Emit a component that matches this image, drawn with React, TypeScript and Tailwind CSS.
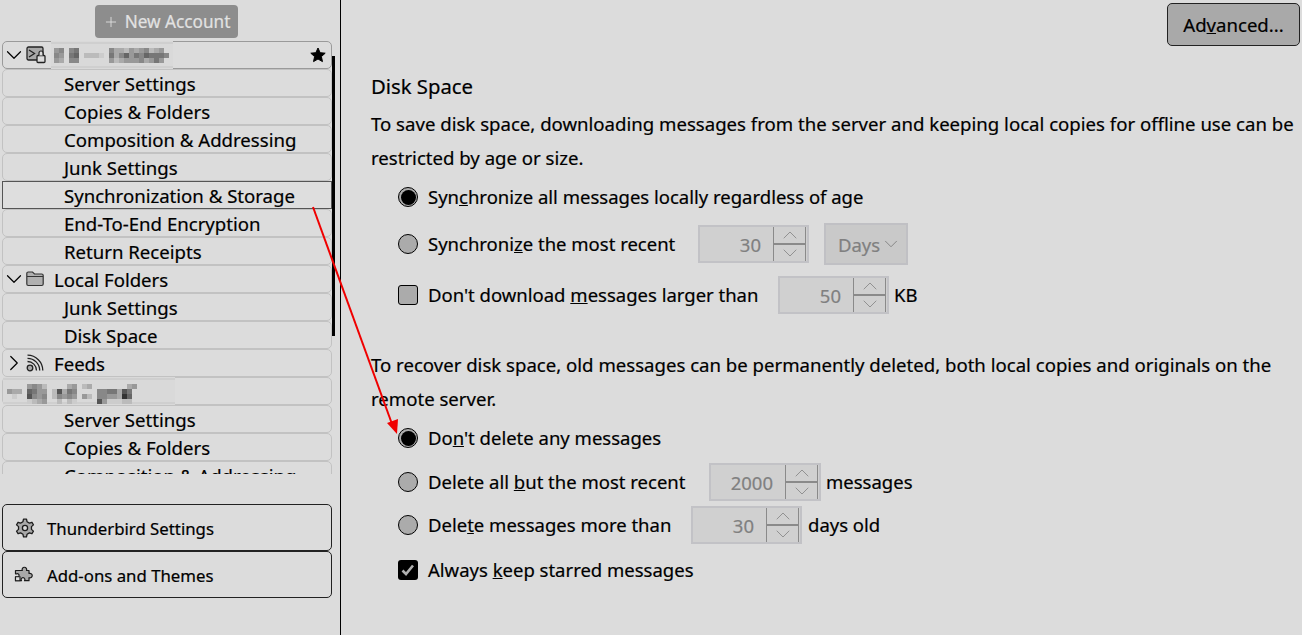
import React from "react";
import { ChevronDown, ChevronRight, ChevronUp, Plus } from "lucide-react";

const font = "font-['Noto_Sans','Open_Sans',sans-serif]";

function Pixels({ cells, w, left, top }: { cells: string; w: number; left: number; top: number }) {
  const rows = cells.split("|");
  return (
    <svg width={w} height={28} className="shrink-0 -my-[1px]">
      <rect x="0" y="0" width={w} height="28" fill="#d9d9d9" />
      <rect x="0" y="1" width={w} height="2" fill="#cfcfcf" />
      <rect x="0" y="25" width={w} height="2" fill="#cfcfcf" />
      {rows.map((r, y) =>
        r.split("").map((c, x) =>
          c === "." ? null : (
            <rect key={x + "-" + y} x={left + x * 5} y={top + y * 5} width={5} height={5} fill={"#" + c + c + c + c + c + c} />
          )
        )
      )}
    </svg>
  );
}

function Row({ children, selected, first }: { children: React.ReactNode; selected?: boolean; first?: boolean }) {
  return (
    <div
      className={
        "h-[28px] shrink-0 flex items-center border text-black " +
        (selected
          ? "border-[#555555] bg-[#dedede]"
          : first
            ? "border-[#9a9a9a] rounded-[5px]"
            : "border-[#c2c2c2] rounded-[5px]")
      }
    >
      {children}
    </div>
  );
}

function Sub({ label, selected }: { label: string; selected?: boolean }) {
  return (
    <Row selected={selected}>
      <span className="pl-[61px] mt-[2px] whitespace-nowrap">{label}</span>
    </Row>
  );
}

function Twist({ open }: { open?: boolean }) {
  const Icon = open ? ChevronDown : ChevronRight;
  return (
    <span className="w-[21px] h-[26px] shrink-0 flex items-center justify-center">
      <Icon size={26} strokeWidth={1.1} className="shrink-0" />
    </span>
  );
}

function Radio({ on }: { on?: boolean }) {
  return (
    <span className="w-[20px] h-[20px] shrink-0 rounded-full border border-black bg-[#ababab] flex items-center justify-center">
      {on && <span className="w-[15px] h-[15px] rounded-full bg-black block" />}
    </span>
  );
}

function Spinner({ value, width }: { value: string; width: string }) {
  return (
    <div className={"h-[38px] border-2 border-[#c2c2c6] bg-[#d0d0d0] flex items-stretch shrink-0 " + width}>
      <div className="flex-1 flex items-center justify-end pr-[12px] pt-[2px] text-[#808080]">{value}</div>
      <div className="w-[33px] border-x border-[#8a8a8a] flex flex-col mr-[1px]">
        <div className="flex-1 flex items-center justify-center overflow-hidden">
          <ChevronUp size={24} strokeWidth={0.9} className="text-[#8a8a8a] shrink-0" />
        </div>
        <div className="h-[2px] bg-[#8a8a8a]" />
        <div className="flex-1 flex items-center justify-center overflow-hidden">
          <ChevronDown size={24} strokeWidth={0.9} className="text-[#8a8a8a] shrink-0" />
        </div>
      </div>
    </div>
  );
}

function Gear() {
  const pts: string[] = [];
  const n = 6;
  for (let i = 0; i < n; i++) {
    const a = (i * 2 * Math.PI) / n - Math.PI / 2;
    const step = (2 * Math.PI) / n;
    const p = (r: number, t: number) => (10 + r * Math.cos(t)).toFixed(2) + " " + (10 + r * Math.sin(t)).toFixed(2);
    pts.push((i === 0 ? "M" : "L") + p(6.6, a - step * 0.3));
    pts.push("L" + p(9, a - step * 0.16));
    pts.push("L" + p(9, a + step * 0.16));
    pts.push("L" + p(6.6, a + step * 0.3));
  }
  return (
    <svg width="20" height="20" viewBox="0 0 20 20" className="shrink-0">
      <path d={pts.join(" ") + "Z"} fill="#a8a8a8" stroke="#1c1c1c" strokeWidth="1.3" strokeLinejoin="round" />
      <circle cx="10" cy="10" r="2.6" fill="#dcdcdc" stroke="#1c1c1c" strokeWidth="1.3" />
    </svg>
  );
}

function PuzzleIcon() {
  return (
    <svg width="21" height="20" viewBox="0 0 21 20" className="shrink-0">
      <path
        d="M6 5.500h2.300a2.300 2.300 0 1 1 4.200 0h2.500v3a2.300 2.300 0 1 1 0 4.200v3h-4.500a1.900 1.900 0 1 0-3 0H1.500v-3.700h1.300a1.700 1.700 0 1 0 0-3.200H1.500V5.500z"
        fill="#a8a8a8"
        stroke="#1c1c1c"
        strokeWidth="1.200"
        strokeLinejoin="round"
      />
      <path d="M1.500 11.800h4.500v3.900H1.500z" fill="#dcdcdc" stroke="#1c1c1c" strokeWidth="1.100" />
    </svg>
  );
}

export default function App() {
  return (
    <div className={"relative w-[1302px] h-[635px] overflow-hidden bg-[#dcdcdc] flex text-[18.6px] leading-[28px] text-black [-webkit-text-stroke:0.2px] " + font}>
      <aside className="relative w-[341px] h-full shrink-0 border-r border-black flex flex-col px-[2px]">
        <div className="w-[329px] h-[41px] shrink-0 flex justify-center pt-[5px] pb-[3px]">
          <div className="w-[143px] h-[33px] rounded-[4px] bg-[#8d8d8d] text-[#e2e2e2] text-[17.200px] flex items-center justify-center gap-[6px]">
            <Plus size={16} strokeWidth={1.3} />
            <span>New Account</span>
          </div>
        </div>
        <div className="w-[330px] h-[433px] overflow-hidden flex flex-col">
          <Row first>
            <Twist open />
            <svg width="20" height="18" viewBox="0 0 20 18" className="ml-[2px] shrink-0">
              <rect x="1" y="1" width="16" height="13" rx="1.500" fill="#a9a9a9" stroke="#222" strokeWidth="1.300" />
              <path d="M3 4l5.500 3.500L3 11" fill="none" stroke="#222" strokeWidth="1.300" />
              <rect x="11" y="9.500" width="8" height="7" rx="1" fill="#dcdcdc" stroke="#222" strokeWidth="1.300" />
              <path d="M13 9.500V7a2 2 0 0 1 4 0v2.500" fill="#dcdcdc" stroke="#222" strokeWidth="1.200" />
            </svg>
            <span className="w-[5px] shrink-0" />
            <Pixels
              w={122}
              left={3}
              top={7}
              cells="98.87......8aab9a98ba9|89.76.bbbc.7a8697867778|9a.88......9ba9998a979"
            />
            <svg width="16" height="16" viewBox="0 0 24 24" className="ml-auto mr-[5px] shrink-0">
              <path d="M12 1.500l3.200 7 7.600.8-5.700 5.100 1.600 7.500L12 18l-6.700 3.900 1.600-7.500-5.700-5.100 7.600-.8z" fill="#000" stroke="#000" strokeWidth="1.500" strokeLinejoin="round" />
            </svg>
          </Row>
          <Sub label="Server Settings" />
          <Sub label="Copies & Folders" />
          <Sub label="Composition & Addressing" />
          <Sub label="Junk Settings" />
          <Sub label="Synchronization & Storage" selected />
          <Sub label="End-To-End Encryption" />
          <Sub label="Return Receipts" />
          <Row>
            <Twist open />
            <svg width="18" height="16" viewBox="0 0 18 16" className="ml-[2px] shrink-0">
              <path d="M.8 2.500a1.500 1.500 0 0 1 1.500-1.500h4.200l2 2h7.200a1.500 1.500 0 0 1 1.500 1.500v8.500a1.500 1.500 0 0 1-1.500 1.500h-13.400a1.500 1.500 0 0 1-1.500-1.500z" fill="#b0b0b0" stroke="#333" strokeWidth="1.200" />
              <path d="M1 5.500h16" stroke="#333" strokeWidth="1" />
            </svg>
            <span className="ml-[10px] mt-[2px]">Local Folders</span>
          </Row>
          <Sub label="Junk Settings" />
          <Sub label="Disk Space" />
          <Row>
            <Twist />
            <svg width="18" height="18" viewBox="0 0 18 18" className="ml-[2px] shrink-0" fill="none" stroke="#222" strokeWidth="1.300">
              <circle cx="4" cy="14" r="2.800" fill="#aaa" />
              <path d="M1.500 7.500a9 9 0 0 1 9 9" />
              <path d="M1.500 4.300a12.200 12.200 0 0 1 12.200 12.200" />
              <path d="M1.500 1.200a15.300 15.300 0 0 1 15.300 15.300" />
            </svg>
            <span className="ml-[10px] mt-[2px]">Feeds</span>
          </Row>
          <Row>
            <Pixels
              w={172}
              left={4}
              top={7}
              cells="....989b....a9.ba.......a9|9aa.6799.b5a78....8877a57|.c..5898.b8989.9b.8899a36|....cba9..b.bc....59cccbb"
            />
          </Row>
          <Sub label="Server Settings" />
          <Sub label="Copies & Folders" />
          <Sub label="Composition & Addressing" />
        </div>
        <div className="w-[330px] mt-[30px] flex flex-col text-[16.800px]">
          <div className="h-[47px] border border-[#222222] rounded-[5px] flex items-center">
            <span className="ml-[12px]"><Gear /></span>
            <span className="ml-[12px] mt-[2px]">Thunderbird Settings</span>
          </div>
          <div className="h-[47px] border border-[#222222] rounded-[5px] flex items-center">
            <span className="ml-[11px]"><PuzzleIcon /></span>
            <span className="ml-[12px] mt-[2px]">Add-ons and Themes</span>
          </div>
        </div>
        <div className="absolute left-[332px] top-[56px] w-[3px] h-[280px] bg-black" />
      </aside>

      <main className="flex-1 min-w-0 flex flex-col pl-[30px]">
        <div className="h-[45px] shrink-0 flex justify-end pr-[2px] pt-[3px]">
          <div className="w-[133px] h-[43px] rounded-[5px] border border-[#222222] bg-[#a9a9a9] flex items-center justify-center">
            <span>
              Ad<span className="underline">v</span>anced...
            </span>
          </div>
        </div>
        <h2 className="mt-[24px] h-[34px] flex items-center text-[20.300px] font-normal">Disk Space</h2>
        <p className="mt-[4px] leading-[34px] w-[925px]">
          To save disk space, downloading messages from the server and keeping local copies for offline use can be restricted by age or size.
        </p>
        <div className="mt-[1px] h-[42px] flex items-center pl-[27px] gap-[10px] text-[18.500px]">
          <Radio on />
          <span>
            Syn<span className="underline">c</span>hronize all messages locally regardless of age
          </span>
        </div>
        <div className="mt-[5px] h-[42px] flex items-center pl-[27px] text-[18.500px]">
          <Radio />
          <span className="ml-[10px] w-[270px] whitespace-nowrap">
            Synchroni<span className="underline">z</span>e the most recent
          </span>
          <Spinner value="30" width="w-[111px]" />
          <div className="ml-[15px] w-[84px] h-[42px] border-2 border-[#c0c0c4] bg-[#c9c9c9] text-[#808080] flex items-center justify-center pl-[8px]">
            <span className="pt-[2px]">Days</span>
            <ChevronDown size={22} strokeWidth={1} className="shrink-0" />
          </div>
        </div>
        <div className="mt-[11px] h-[38px] flex items-center pl-[27px] text-[18.500px]">
          <span className="w-[20px] h-[20px] rounded-[3px] border border-black bg-[#ababab] shrink-0" />
          <span className="ml-[10px] w-[350px] whitespace-nowrap">
            Don't download <span className="underline">m</span>essages larger than
          </span>
          <Spinner value="50" width="w-[111px]" />
          <span className="ml-[5px]">KB</span>
        </div>
        <p className="mt-[34px] leading-[34px] w-[925px]">
          To recover disk space, old messages can be permanently deleted, both local copies and originals on the remote server.
        </p>
        <div className="mt-[2px] h-[40px] flex items-center pl-[27px] gap-[10px] text-[18.500px]">
          <Radio on />
          <span>
            Do<span className="underline">n</span>'t delete any messages
          </span>
        </div>
        <div className="mt-[5px] h-[38px] flex items-center pl-[27px] text-[18.500px]">
          <Radio />
          <span className="ml-[10px] w-[281px] whitespace-nowrap">
            Delete all <span className="underline">b</span>ut the most recent
          </span>
          <Spinner value="2000" width="w-[112px]" />
          <span className="ml-[5px]">messages</span>
        </div>
        <div className="mt-[5px] h-[38px] flex items-center pl-[27px] text-[18.500px]">
          <Radio />
          <span className="ml-[10px] w-[263px] whitespace-nowrap">
            Dele<span className="underline">t</span>e messages more than
          </span>
          <Spinner value="30" width="w-[111px]" />
          <span className="ml-[6px]">days old</span>
        </div>
        <div className="mt-[6px] h-[40px] flex items-center pl-[27px] gap-[10px] text-[18.500px]">
          <span className="w-[20px] h-[20px] rounded-[3px] bg-black shrink-0 flex items-center justify-center">
            <svg width="16" height="16" viewBox="0 0 16 16" fill="none" stroke="#b0b0b0" strokeWidth="2.600">
              <path d="M2.500 8.500l3.500 3.500 7-8.500" />
            </svg>
          </span>
          <span>
            Always <span className="underline">k</span>eep starred messages
          </span>
        </div>
      </main>

      <svg className="absolute inset-0 pointer-events-none" width="1302" height="635">
        <line x1="313" y1="207" x2="392" y2="424" stroke="#f00000" strokeWidth="2" />
        <polygon points="397,434 387,423 398,419" fill="#f00000" />
      </svg>
    </div>
  );
}
